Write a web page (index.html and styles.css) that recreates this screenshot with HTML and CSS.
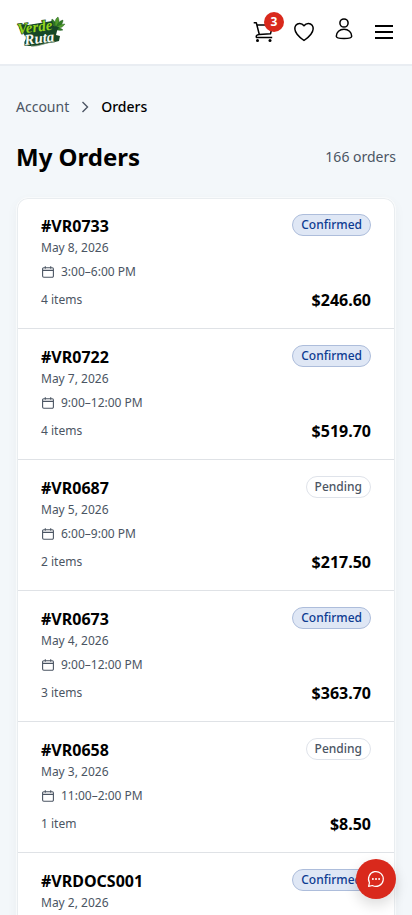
FILE: index.html
```html
<!DOCTYPE html>
<html lang="en">
<head>
<meta charset="utf-8">
<meta name="viewport" content="width=device-width, initial-scale=1">
<title>My Orders</title>
<link rel="stylesheet" href="styles.css">
</head>
<body>
<svg class="defs" width="0" height="0">
  <symbol id="calendar" viewBox="0 0 14 14"><path d="M2.700 2.800h8.600a1.100 1.100 0 0 1 1.100 1.100v7.200a1.200 1.200 0 0 1-1.200 1.200H2.800a1.200 1.200 0 0 1-1.200-1.200V3.900a1.100 1.100 0 0 1 1.100-1.100ZM1.600 5.400h10.800M4.300 1.200v2.600M9.700 1.200v2.600" fill="none" stroke="currentColor" stroke-width="1.100"/></symbol>
</svg>
<header class="header">
  <a class="logo" aria-label="Verde Ruta">
    <svg width="50" height="34" viewBox="0 0 50 34">
      <g fill="#2f7a22" stroke="#1d5420" stroke-width=".4">
        <path d="M40 13C36 9 35 6 36 4c3 2 5 5 4 9Z"/><path d="M40 13c-2-5-1-9 2-11 2 4 1 8-2 11Z" fill="#4f9a2a"/><path d="M40 13c1-4 3-7 7-8 0 4-3 7-7 8Z"/><path d="M39 13c3-3 6-4 10-4-3 4-6 5-10 4Z" fill="#4f9a2a"/><path d="M38 13c4-1 7 0 9 2-3 1-7 0-9-2Z"/>
      </g>
      <path d="M3 11c2-2 6-2 9-1l24-4 2 5 5 1-2 4-1 4 4 1-1 5-4 1c-7 0-16 5-26 4-5-1-6-3-3-7l1-3c-3 0-4-3-4-5-2 0-4-2-4-5Z" fill="#174726"/>
      <g class="logo-text">
        <text class="verde" x="2" y="19" textLength="35" lengthAdjust="spacingAndGlyphs" transform="rotate(-7 2 19)">Verde</text>
        <text class="ruta" x="9" y="30" textLength="30" lengthAdjust="spacingAndGlyphs" transform="rotate(-7 9 30)">Ruta</text>
      </g>
      <path d="M15 31c8 1 15-4 24-4" fill="none" stroke="#829b84" stroke-width=".8"/>
    </svg>
  </a>
  <nav class="actions">
    <a class="action cart" aria-label="Cart"><svg width="24" height="24" viewBox="0 0 24 24" fill="none" stroke="#000" stroke-width="1.500" stroke-linejoin="round"><path d="M1.700 2.700h2.600l3 11.800M4.900 5h15.700l-2.100 8.800-11.200.8c-2.800.4-3.400 1.100-2.900 2.800h15.800"/><circle cx="5.500" cy="20.500" r="1.500" fill="#000" stroke="none"/><circle cx="18" cy="20.500" r="1.500" fill="#000" stroke="none"/></svg><span class="count">3</span></a>
    <a class="action" aria-label="Favorites"><svg width="24" height="24" viewBox="0 0 24 24" fill="none" stroke="#000" stroke-width="1.500" stroke-linejoin="round"><path d="M12 5.800C9.600 2.600 5.700 2.800 3.900 5.200c-1.700 2.500-.9 6.300 1.200 9 1.900 2.500 4.100 4.300 6.900 6.300 2.800-2 5-3.800 6.900-6.300 2.100-2.700 2.900-6.500 1.200-9C18.300 2.800 14.400 2.600 12 5.800Z"/></svg></a>
    <a class="action user" aria-label="Account"><svg width="24" height="24" viewBox="0 0 24 24" fill="none" stroke="#000" stroke-width="1.500"><circle cx="12" cy="6" r="4.100"/><path d="M4.300 19.200c0-4 3.300-6.900 7.700-6.900s7.700 2.900 7.700 6.900c0 1.400-2.700 2.300-7.700 2.300s-7.700-.9-7.700-2.300Z"/></svg></a>
    <a class="action" aria-label="Menu"><svg width="24" height="24" viewBox="0 0 24 24" stroke="#000" stroke-width="2"><path d="M3 6h18M3 12h18M3 18h18"/></svg></a>
  </nav>
</header>
<main class="main">
  <nav class="crumbs"><a>Account</a><svg width="16" height="16" viewBox="0 0 16 16"><path d="m5.500 3 5 5-5 5" fill="none" stroke="currentColor" stroke-width="1.400"/></svg><span class="current">Orders</span></nav>
  <div class="title-row"><h1>My Orders</h1><span class="total">166 orders</span></div>
  <section class="orders">
    <article class="order">
      <div class="top"><h2>#VR0733</h2><span class="badge confirmed">Confirmed</span></div>
      <p class="date">May 8, 2026</p>
      <p class="time"><svg width="14" height="14"><use href="#calendar"/></svg>3:00–6:00 PM</p>
      <div class="bottom"><span>4 items</span><strong>$246.60</strong></div>
    </article>
    <article class="order">
      <div class="top"><h2>#VR0722</h2><span class="badge confirmed">Confirmed</span></div>
      <p class="date">May 7, 2026</p>
      <p class="time"><svg width="14" height="14"><use href="#calendar"/></svg>9:00–12:00 PM</p>
      <div class="bottom"><span>4 items</span><strong>$519.70</strong></div>
    </article>
    <article class="order">
      <div class="top"><h2>#VR0687</h2><span class="badge">Pending</span></div>
      <p class="date">May 5, 2026</p>
      <p class="time"><svg width="14" height="14"><use href="#calendar"/></svg>6:00–9:00 PM</p>
      <div class="bottom"><span>2 items</span><strong>$217.50</strong></div>
    </article>
    <article class="order">
      <div class="top"><h2>#VR0673</h2><span class="badge confirmed">Confirmed</span></div>
      <p class="date">May 4, 2026</p>
      <p class="time"><svg width="14" height="14"><use href="#calendar"/></svg>9:00–12:00 PM</p>
      <div class="bottom"><span>3 items</span><strong>$363.70</strong></div>
    </article>
    <article class="order">
      <div class="top"><h2>#VR0658</h2><span class="badge">Pending</span></div>
      <p class="date">May 3, 2026</p>
      <p class="time"><svg width="14" height="14"><use href="#calendar"/></svg>11:00–2:00 PM</p>
      <div class="bottom"><span>1 item</span><strong>$8.50</strong></div>
    </article>
    <article class="order">
      <div class="top"><h2>#VRDOCS001</h2><span class="badge confirmed">Confirmed</span></div>
      <p class="date">May 2, 2026</p>
    </article>
  </section>
</main>
<button class="chat" aria-label="Chat"><svg width="20" height="20" viewBox="0 0 20 20" fill="none" stroke="#fff" stroke-width="1.200" stroke-linejoin="round"><path d="M2.600 17.300 3.500 13.700A7.400 7.400 0 1 1 6.400 16.500Z"/><g fill="#fff" stroke="none"><circle cx="6.900" cy="10" r="1"/><circle cx="10" cy="10" r="1"/><circle cx="13.100" cy="10" r="1"/></g></svg></button>
</body>
</html>
```
FILE: styles.css
```css
* { box-sizing: border-box; }
html, body { height: 100%; }
body {
  margin: 0;
  overflow: hidden;
  background: #f3f7fa;
  color: #000;
  font-family: "Noto Sans", sans-serif;
}
svg { display: block; flex: none; }
.defs { position: absolute; }
h1, h2, p { margin: 0; }
.header {
  height: 66px;
  padding: 0 16px;
  display: flex;
  align-items: center;
  justify-content: space-between;
  background: #fff;
  border-bottom: 2px solid #e9edf2;
}
.logo-text {
  font: italic 700 15px "Liberation Serif", serif;
  paint-order: stroke;
  stroke: #174726;
  stroke-width: 1.2px;
}
.verde { fill: #94d51c; }
.ruta { fill: #f8faf4; }
.actions { display: flex; gap: 16px; }
.action { position: relative; width: 24px; height: 24px; }
.user { margin-top: -3px; margin-bottom: 3px; }
.count {
  position: absolute;
  left: 12px;
  top: -8px;
  width: 20px;
  height: 20px;
  border-radius: 50%;
  background: #d9291c;
  color: #fff;
  font-size: 12px;
  font-weight: 700;
  line-height: 20px;
  text-align: center;
}
.main { padding: 31px 16px 0; }
.crumbs {
  display: flex;
  align-items: center;
  gap: 8px;
  height: 20px;
  color: #4b5563;
  font-size: 14px;
  line-height: 20px;
}
.current { color: #000; font-weight: 500; }
.title-row {
  display: flex;
  align-items: center;
  justify-content: space-between;
  height: 32px;
  margin: 24px 0;
}
h1 { font-size: 24px; font-weight: 700; line-height: 32px; }
.total { color: #4b5563; font-size: 14px; line-height: 20px; }
.orders {
  padding: 0 1px;
  border: 1px solid #f8fafb;
  border-radius: 12px;
  background: #fff;
  box-shadow: inset 0 0 0 1px #e9edf0, 0 4px 12px rgba(0, 0, 0, .04);
}
.order {
  height: 131px;
  padding: 16px 23px;
  border-bottom: 1px solid #dfe2e6;
  color: #4b5563;
  font-size: 12px;
  line-height: 16px;
}
.top { display: flex; justify-content: space-between; align-items: flex-start; height: 24px; }
h2 { color: #000; font-size: 16px; font-weight: 700; line-height: 24px; }
.badge {
  height: 22px;
  padding: 2px 8px;
  border: 1px solid #dfe3ea;
  border-radius: 11px;
  font-size: 12px;
  font-weight: 500;
  line-height: 16px;
}
.confirmed { background: #dfe7f5; border-color: #adbddb; color: #0c3b91; }
.date { margin-top: 2px; }
.time { display: flex; align-items: center; gap: 6px; margin-top: 8px; }
.bottom { display: flex; align-items: center; justify-content: space-between; height: 24px; margin-top: 8px; }
.bottom strong { color: #000; font-size: 16px; font-weight: 700; line-height: 24px; }
.chat {
  position: fixed;
  right: 16px;
  bottom: 16px;
  display: grid;
  place-items: center;
  width: 40px;
  height: 40px;
  padding: 0;
  border: 0;
  border-radius: 50%;
  background: #d9291c;
  box-shadow: 0 6px 14px rgba(0, 0, 0, .14);
}
```
